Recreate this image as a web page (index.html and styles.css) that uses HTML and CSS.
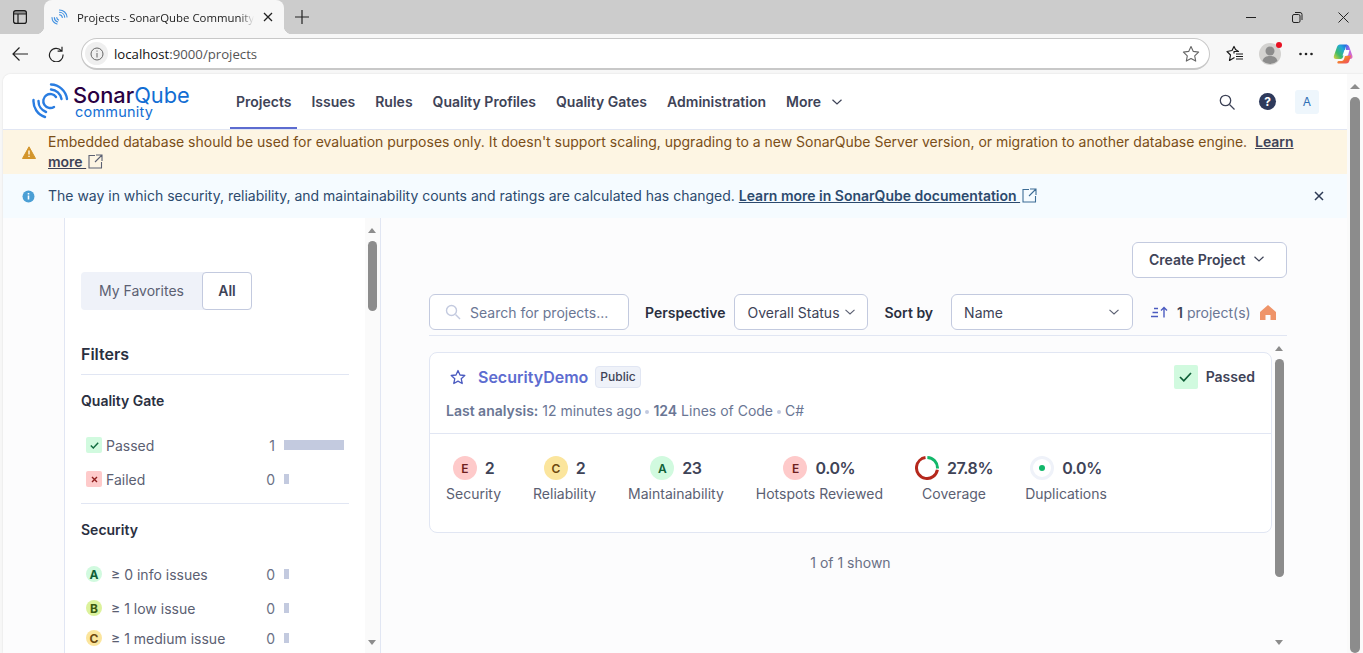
FILE: index.html
```html
<!DOCTYPE html>
<html lang="en">
<head>
<meta charset="utf-8">
<title>Projects - SonarQube Community</title>
<link rel="stylesheet" href="styles.css">
</head>
<body>
<div class="tabstrip">
  <svg class="tabs-btn" width="14" height="14" viewBox="0 0 14 14"><rect x=".6" y=".6" width="12.800" height="12.800" rx="2.200" fill="none" stroke="#1a1a1a" stroke-width="1.200"/><path d="M1 4h12M5 4v9.500" stroke="#1a1a1a" stroke-width="1.200" fill="none"/><rect x="1" y="1" width="12" height="3" fill="#1a1a1a" opacity=".35"/></svg>
  <div class="tab">
    <svg width="17" height="17" viewBox="0 0 17 17" fill="none" stroke="#3f8fe0" stroke-width="1.100" stroke-linecap="round"><path d="M1 8.500a7 7 0 0 0 5 6.500M3.300 8.600a5 5 0 0 0 3.400 4.300M5.800 8.600a3 3 0 0 0 1.700 2.300M8.500 1a7.500 7.500 0 0 1 7.500 7M8.500 3.300a5.300 5.300 0 0 1 5.200 5M8.500 5.700a3 3 0 0 1 2.800 2.800"/></svg>
    <span class="tab-title">Projects - SonarQube Community</span>
    <svg width="10" height="10" viewBox="0 0 10 10"><path d="M1 1l8 8M9 1l-8 8" stroke="#222" stroke-width="1.300"/></svg>
  </div>
  <svg class="newtab" width="14" height="14" viewBox="0 0 14 14"><path d="M7 0v14M0 7h14" stroke="#222" stroke-width="1.200"/></svg>
  <div class="winbtns">
    <svg width="11" height="11" viewBox="0 0 11 11"><path d="M0 5.500h10" stroke="#222" stroke-width="1"/></svg>
    <svg width="11" height="11" viewBox="0 0 11 11" fill="none" stroke="#222"><rect x=".5" y="2.500" width="7.500" height="8" rx="1.500"/><path d="M3 .5h5a2 2 0 0 1 2 2V8"/></svg>
    <svg width="11" height="11" viewBox="0 0 11 11"><path d="M.5.500l10 10M10.500 .5l-10 10" stroke="#222" stroke-width="1"/></svg>
  </div>
</div>
<div class="toolbar">
  <svg width="16" height="14" viewBox="0 0 16 14" fill="none" stroke="#222" stroke-width="1.200"><path d="M16 7H1M7.500.5L1 7l6.500 6.500"/></svg>
  <svg class="reload" width="16" height="16" viewBox="0 0 16 16" fill="none" stroke="#222" stroke-width="1.200"><path d="M13.500 4.800A6.800 6.800 0 1 0 15 8.500M14 .8v4.400H9.600"/></svg>
  <div class="omnibox">
    <span class="site-info"><svg width="14" height="14" viewBox="0 0 14 14" fill="none" stroke="#666"><circle cx="7" cy="7" r="6"/><path d="M7 6v4.500M7 3.500v1.200"/></svg></span>
    <span class="url">localhost<span class="url-dim">:9000/projects</span></span>
    <svg class="omni-star" width="18" height="18" viewBox="0 0 18 18" fill="none" stroke="#666" stroke-width="1.100" stroke-linejoin="round"><path d="M9 1.500l2.300 4.900 5.300.7-3.900 3.700 1 5.300L9 13.500l-4.700 2.600 1-5.300-3.900-3.700 5.300-.7z"/></svg>
  </div>
  <svg class="fav" width="18" height="18" viewBox="0 0 18 18" fill="none" stroke="#1a1a1a" stroke-width="1.200" stroke-linejoin="round"><path d="M8 8.500V6.500H12.500L9.500 4.500 8 1.500 6 5.500 1 6.500l3.500 3.500L3.500 15.500l5-3"/><path d="M10 9h7M10 11.500h7M10 14h7"/></svg>
  <div class="avatar">
    <svg width="22" height="22" viewBox="0 0 22 22"><circle cx="11" cy="11" r="11" fill="#d3d2d0"/><circle cx="11" cy="8" r="4.500" fill="#8c8c8c"/><path d="M3.500 18c1-3.800 4-5 7.500-5s6.500 1.200 7.500 5a11 11 0 0 1-15 0z" fill="#8c8c8c"/></svg>
    <span class="avatar-dot"></span>
  </div>
  <svg class="dots" width="14" height="4" viewBox="0 0 14 4" fill="#222"><circle cx="1.500" cy="2" r="1.300"/><circle cx="7" cy="2" r="1.300"/><circle cx="12.500" cy="2" r="1.300"/></svg>
  <svg class="copilot" width="22" height="22" viewBox="0 0 22 22"><defs><linearGradient id="cg1" x1="0" y1="1" x2="1" y2="0"><stop offset="0" stop-color="#e8d23a"/><stop offset=".35" stop-color="#3dbb6a"/><stop offset=".7" stop-color="#22a8d8"/><stop offset="1" stop-color="#1f5fe0"/></linearGradient><linearGradient id="cg2" x1="0" y1="0" x2="1" y2="1"><stop offset="0" stop-color="#3f6fe8"/><stop offset=".5" stop-color="#b566e8"/><stop offset="1" stop-color="#ee6bb0"/></linearGradient><linearGradient id="cg3" x1="0" y1="0" x2="1" y2="1"><stop offset="0" stop-color="#f7c02b"/><stop offset=".6" stop-color="#f26a3a"/><stop offset="1" stop-color="#ee4d7c"/></linearGradient></defs><path d="M7 1.500h6.500L10 14c-.5 1.500-1.500 2-3 2H3C1 16 .3 14.500 1 12.500l3-8.500C4.500 2.500 5.500 1.500 7 1.500z" fill="url(#cg1)"/><path d="M13 1.500c1.800 0 2.800 1 3.300 2.500l3 8.500c.7 2-.2 3.500-2.200 3.500h-3L13 6z" fill="url(#cg2)"/><path d="M5 20.500h8c1.800 0 2.800-.8 3.300-2.500L18 12.500l-6 .5-1 3c-.5 1.500-1.500 2-3 2H5.500c-1.500 0-1.500 2.500-.5 2.500z" fill="url(#cg3)"/><path d="M11.500 7h5l-1.500 5.500h-5.500z" fill="#fff"/></svg>
</div>

<div class="page">
  <header class="nav">
    <div class="logo">
      <svg width="38" height="37" viewBox="0 0 38 37" fill="none" stroke="#2a7de1" stroke-width="2.400" stroke-linecap="round"><path d="M19 1.500A16.500 16.500 0 0 1 35 16M19 6.500A11.500 11.500 0 0 1 29.500 16M1.500 17A16.500 16.500 0 0 0 13 34M6.500 18A11.500 11.500 0 0 0 14 29"/><path d="M24 14A7 7 0 1 0 22 24"/></svg>
      <div class="logo-text">
        <div class="logo-name">Sonar<span class="logo-blue">Qube</span></div>
        <div class="logo-sub">community</div>
      </div>
    </div>
    <nav class="nav-links">
      <a class="nav-link active">Projects</a>
      <a class="nav-link">Issues</a>
      <a class="nav-link">Rules</a>
      <a class="nav-link">Quality Profiles</a>
      <a class="nav-link">Quality Gates</a>
      <a class="nav-link">Administration</a>
      <a class="nav-link">More <svg class="more-chev" width="10" height="6" viewBox="0 0 10 6" fill="none" stroke="#3e4357" stroke-width="1.200"><path d="M.5.800L5 5 9.500.800"/></svg></a>
    </nav>
    <div class="nav-right">
      <svg width="16" height="16" viewBox="0 0 16 16" fill="none" stroke="#3e4357" stroke-width="1.300"><circle cx="6.500" cy="6.500" r="5.200"/><path d="M10.500 10.500l5 5"/></svg>
      <span class="help">?</span>
      <span class="user-chip">A</span>
    </div>
  </header>
  <div class="banner warn">
    <svg class="banner-icon" width="14" height="13" viewBox="0 0 14 13"><path d="M7 .8L13.500 12.500H.5z" fill="#d3952b" stroke="#d3952b" stroke-linejoin="round"/><path d="M7 4.500v4M7 9.800v1.200" stroke="#fdf5e3" stroke-width="1.500"/></svg>
    <p class="banner-text">Embedded database should be used for evaluation purposes only. It doesn't support scaling, upgrading to a new SonarQube Server version, or migration to another database engine.&nbsp; <a class="banner-link">Learn more <svg class="ext" width="15" height="15" viewBox="0 0 15 15" fill="none" stroke="#5b6072" stroke-width="1.100"><path d="M7 1.500H1v12.500h12.500V8M8 1h6v6M14 1L7 8"/></svg></a></p>
  </div>
  <div class="banner info">
    <svg class="banner-icon icon-info" width="13" height="13" viewBox="0 0 13 13"><circle cx="6.500" cy="6.500" r="6" fill="#4b9fd5"/><path d="M6.500 5.500v4M6.500 3v1.500" stroke="#fff" stroke-width="1.600"/></svg>
    <p class="banner-text grow">The way in which security, reliability, and maintainability counts and ratings are calculated has changed. <a class="banner-link">Learn more in SonarQube documentation <svg class="ext" width="15" height="15" viewBox="0 0 15 15" fill="none" stroke="#3d6d96" stroke-width="1.100"><path d="M7 1.500H1v12.500h12.500V8M8 1h6v6M14 1L7 8"/></svg></a></p>
    <svg class="banner-close" width="10" height="10" viewBox="0 0 10 10"><path d="M1 1l8 8M9 1l-8 8" stroke="#2d3a55" stroke-width="1.500"/></svg>
  </div>
  <div class="workspace">
    <aside class="sidebar">
      <div class="segment">
        <span class="seg-off">My Favorites</span>
        <span class="seg-on">All</span>
      </div>
      <h2 class="filters-title">Filters</h2>
      <section class="facet facet-first">
        <h3 class="facet-title">Quality Gate</h3>
        <div class="facet-row">
          <span class="qg-chip ok"><svg width="9" height="7" viewBox="0 0 9 7" fill="none" stroke="#0f6b3f" stroke-width="1.400"><path d="M.8 3.500L3.300 6 8.200.8"/></svg></span>
          <span class="facet-label tight">Passed</span><span class="facet-count">1</span><span class="bar full"></span>
        </div>
        <div class="facet-row">
          <span class="qg-chip bad"><svg width="7" height="7" viewBox="0 0 7 7" fill="none" stroke="#8f1d1d" stroke-width="1.400"><path d="M1 1l5 5M6 1L1 6"/></svg></span>
          <span class="facet-label tight">Failed</span><span class="facet-count">0</span><span class="bar"></span>
        </div>
      </section>
      <section class="facet">
        <h3 class="facet-title">Security</h3>
        <div class="facet-row">
          <span class="rate small r-a">A</span>
          <span class="facet-label">≥ 0 info issues</span><span class="facet-count">0</span><span class="bar"></span>
        </div>
        <div class="facet-row">
          <span class="rate small r-b">B</span>
          <span class="facet-label">≥ 1 low issue</span><span class="facet-count">0</span><span class="bar"></span>
        </div>
        <div class="facet-row row-tight">
          <span class="rate small r-c">C</span>
          <span class="facet-label">≥ 1 medium issue</span><span class="facet-count">0</span><span class="bar"></span>
        </div>
      </section>
      <div class="sb sb-side"><i class="sb-up"></i><b class="sb-thumb"></b><i class="sb-down"></i></div>
    </aside>
    <main class="main">
      <div class="create-row">
        <button class="create-btn">Create Project <svg width="10" height="6" viewBox="0 0 10 6" fill="none" stroke="#3e4357" stroke-width="1.200"><path d="M.5.800L5 5 9.500.800"/></svg></button>
      </div>
      <div class="controls">
        <div class="search"><svg width="16" height="16" viewBox="0 0 16 16" fill="none" stroke="#c3cadf" stroke-width="1.400"><circle cx="6.500" cy="6.500" r="5"/><path d="M10.500 10.500l4.500 4.500"/></svg><span class="sel-text">Search for projects...</span></div>
        <span class="ctl-label">Perspective</span>
        <div class="select sel-persp"><span class="sel-text">Overall Status</span><svg width="10" height="6" viewBox="0 0 10 6" fill="none" stroke="#5b6072" stroke-width="1.100"><path d="M.5.800L5 5 9.500.800"/></svg></div>
        <span class="ctl-label sort-label">Sort by</span>
        <div class="select sel-sort"><span class="sel-text">Name</span><svg width="10" height="6" viewBox="0 0 10 6" fill="none" stroke="#5b6072" stroke-width="1.100"><path d="M.5.800L5 5 9.500.800"/></svg></div>
        <svg class="sort-icon" width="17" height="12" viewBox="0 0 17 12" fill="none" stroke="#4b5bc0" stroke-width="1.400"><path d="M3 2.500h4M1.500 6.500h5.500M0 10.500h7M13 11.500V1.500M10 4.500l3-3 3 3"/></svg>
        <span class="pcount"><b>1</b> project(s)</span>
        <svg class="home" width="16" height="15" viewBox="0 0 16 15"><path d="M8 0L16 7v8h-5.500v-5h-5v5H0V7z" fill="#ef9469"/></svg>
      </div>
      <article class="card">
        <div class="card-top">
          <div class="card-title-row">
            <svg class="star" width="16" height="16" viewBox="0 0 16 16" fill="none" stroke="#4b5bc0" stroke-width="1.300" stroke-linejoin="round"><path d="M8 1.500l2 4.500 4.800.5-3.600 3.200 1 4.800L8 12.100l-4.200 2.400 1-4.800L1.200 6.500 6 6z"/></svg>
            <a class="project-name">SecurityDemo</a>
            <span class="badge">Public</span>
            <span class="gate"><span class="gate-chip"><svg width="13" height="10" viewBox="0 0 13 10" fill="none" stroke="#0f5f38" stroke-width="1.700"><path d="M1 5l3.800 3.800L12 1"/></svg></span><span class="gate-text">Passed</span></span>
          </div>
          <div class="meta"><b>Last analysis:</b> 12 minutes ago<i class="dot"></i><b>124</b> Lines of Code<i class="dot"></i>C#</div>
        </div>
        <div class="measures">
          <div class="measure m-sec"><div class="m-val"><span class="rate r-e">E</span>2</div><div class="m-label">Security</div></div>
          <div class="measure m-rel"><div class="m-val"><span class="rate r-c">C</span>2</div><div class="m-label">Reliability</div></div>
          <div class="measure m-main"><div class="m-val"><span class="rate r-a">A</span>23</div><div class="m-label">Maintainability</div></div>
          <div class="measure m-hot"><div class="m-val"><span class="rate r-e">E</span>0.0%</div><div class="m-label">Hotspots Reviewed</div></div>
          <div class="measure m-cov"><div class="m-val"><svg class="ring" width="24" height="24" viewBox="0 0 24 24" fill="none" stroke-width="3"><circle cx="12" cy="12" r="10.500" stroke="#b5281c" stroke-dasharray="46 20" transform="rotate(9 12 12)"/><circle cx="12" cy="12" r="10.500" stroke="#12b76a" stroke-dasharray="16.500 50" transform="rotate(-88 12 12)"/></svg>27.8%</div><div class="m-label">Coverage</div></div>
          <div class="measure m-dup"><div class="m-val"><svg class="ring" width="24" height="24" viewBox="0 0 24 24" fill="none"><circle cx="12" cy="12" r="10.500" stroke="#eff2f9" stroke-width="3"/><circle cx="12" cy="12" r="3" fill="#12b76a"/></svg>0.0%</div><div class="m-label">Duplications</div></div>
        </div>
      </article>
      <div class="shown">1 of 1 shown</div>
      <div class="sb sb-list"><i class="sb-up"></i><b class="sb-thumb"></b><i class="sb-down"></i></div>
    </main>
  </div>
  <div class="sb sb-page"><i class="sb-up"></i><b class="sb-thumb"></b></div>
</div>
</body>
</html>
```
FILE: styles.css
```css
* { box-sizing: border-box; }
html, body { margin: 0; height: 653px; overflow: hidden; }
body { background: #f7f7f7; font-family: Inter, "Liberation Sans", sans-serif; font-size: 14px; color: #3e4357; }
p, h2, h3 { margin: 0; }

.tabstrip { height: 34px; background: #cccccc; display: flex; align-items: center; position: relative; }
.tabs-btn { margin-left: 13px; flex: none; }
.tab { position: relative; width: 240px; height: 34px; margin-left: 17px; background: #f7f7f7; border-radius: 8px 8px 0 0; display: flex; align-items: center; padding: 0 11px 0 7px; gap: 9px; }
.tab::before, .tab::after { content: ""; position: absolute; bottom: 0; width: 8px; height: 8px; }
.tab::before { left: -8px; background: radial-gradient(circle at 0 0, transparent 8px, #f7f7f7 8.500px); }
.tab::after { right: -8px; background: radial-gradient(circle at 100% 0, transparent 8px, #f7f7f7 8.500px); }
.tab-title { font: 11.400px "Open Sans", sans-serif; color: #222; flex: 1; white-space: nowrap; overflow: hidden; width: 176px; -webkit-mask-image: linear-gradient(90deg, #000 92%, transparent); mask-image: linear-gradient(90deg, #000 92%, transparent); }
.newtab { margin-left: 11px; }
.winbtns { margin-left: auto; display: flex; gap: 35px; padding-right: 14px; align-items: center; }

.toolbar { height: 40px; display: flex; align-items: center; padding-left: 12px; background: #f7f7f7; }
.reload { margin-left: 20px; }
.omnibox { width: 1129px; height: 32px; margin-left: 17px; border: 1px solid #c8c8c8; border-bottom-width: 2px; border-radius: 16px; background: #fff; display: flex; align-items: center; padding-left: 3px; }
.site-info { width: 23px; height: 23px; border-radius: 50%; background: #efefef; display: flex; align-items: center; justify-content: center; }
.url { margin-left: 6px; font: 13.200px "Open Sans", sans-serif; color: #111; flex: 1; }
.url-dim { color: #555; }
.omni-star { margin-right: 9px; }
.fav { margin-left: 16px; }
.avatar { position: relative; margin-left: 15px; width: 22px; height: 22px; }
.avatar svg { display: block; }
.avatar-dot { position: absolute; right: -1px; top: -1px; width: 6px; height: 6px; border-radius: 50%; background: #e81123; }
.dots { margin-left: 18px; }
.copilot { margin-left: 20px; }

.page { position: relative; height: 579px; margin-left: 3px; background: #fafafa; border-radius: 8px 0 0 0; display: flex; flex-direction: column; overflow: hidden; padding-right: 16px; box-shadow: 0 0 2px rgba(0,0,0,.12); }

.nav { height: 56px; flex: none; display: flex; align-items: center; padding-left: 29px; border-bottom: 1px solid #e1e6f3; background: #fff; }
.logo { display: flex; align-items: center; gap: 3px; width: 198px; flex: none; }
.logo-text { line-height: 1; }
.logo-name { font: 500 21.800px/20px Inter, sans-serif; color: #290042; }
.logo-blue { color: #126ed3; font-weight: 400; }
.logo-sub { font: 400 14.500px/14px Inter, sans-serif; color: #126ed3; letter-spacing: .2px; margin: 0 0 0 2px; }
.nav-links { display: flex; gap: 20px; height: 55px; align-items: center; margin-left: 6px; }
.nav-link { font-weight: 600; font-size: 14px; color: #3e4357; position: relative; white-space: nowrap; height: 55px; line-height: 55px; display: block; }
.nav-link.active::after { content: ""; position: absolute; left: -6px; right: -6px; bottom: 0; height: 2px; background: #5d6cd0; }
.more-chev { margin-left: 7px; vertical-align: 2px; }
.nav-right { margin-left: auto; display: flex; align-items: center; padding-right: 28px; }
.help { width: 17px; height: 17px; margin-left: 24px; border-radius: 50%; background: #2e3a5c; color: #fff; font-weight: 700; font-size: 12px; line-height: 17px; text-align: center; }
.user-chip { width: 24px; height: 24px; margin-left: 19px; border-radius: 3px; background: #eef6fc; color: #2f6fb5; font-size: 12px; line-height: 24px; text-align: center; }

.banner { flex: none; display: flex; align-items: center; padding-left: 19px; padding-right: 23px; font-size: 14px; line-height: 20px; height: 44px; }
.banner-icon { flex: none; margin-right: 12px; }
.banner-text { letter-spacing: -.006px; }
.icon-info { margin-right: 13px; }
.warn { background: #fdf5e3; color: #7a4e17; }
.info { background: #f5fbff; color: #2c4a6e; }
.banner-link { font-weight: 600; text-decoration: underline; color: #3e4357; }
.info .banner-link { color: #2c4a6e; }
.ext { vertical-align: -2px; margin-left: 2px; }
.warn .banner-text { width: 1260px; }
.grow { flex: 1; }

.workspace { flex: 1; min-height: 0; display: flex; background: #fcfcfd; position: relative; }
.sidebar { position: relative; flex: none; width: 317px; margin-left: 61px; background: #fff; border-left: 1px solid #e1e6f3; border-right: 1px solid #e1e6f3; padding: 54px 31px 0 16px; overflow: hidden; }
.segment { display: flex; width: 171px; height: 38px; background: #eff2f9; border-radius: 4px; }
.seg-off { width: 121px; line-height: 38px; text-align: center; color: #5b6072; }
.seg-on { width: 50px; line-height: 36px; text-align: center; font-weight: 600; background: #fff; border: 1px solid #c3cadf; border-radius: 4px; }
.filters-title { font-size: 16px; font-weight: 600; line-height: 24px; color: #2a2f40; margin-top: 32px; padding-bottom: 8px; border-bottom: 1px solid #e1e6f3; }
.facet { padding-top: 16px; }
.facet-first { padding-bottom: 7px; border-bottom: 1px solid #e1e6f3; }
.facet-title { font-size: 14px; font-weight: 600; line-height: 20px; color: #2a2f40; margin-bottom: 17px; }
.facet-row { height: 34px; display: flex; align-items: center; padding-left: 5px; color: #5b6072; }
.row-tight { height: 26px; }
.facet-label { margin-left: 9px; flex: 1; }
.facet-label.tight { margin-left: 4px; }
.facet-count { margin-right: 9px; color: #6a7085; }
.bar { width: 5px; height: 10px; background: #c3cadf; margin-right: 60px; }
.bar.full { width: 60px; margin-right: 5px; }
.qg-chip { width: 16px; height: 16px; border-radius: 2px; display: flex; align-items: center; justify-content: center; }
.ok { background: #d1fadf; }
.bad { background: #fecaca; }

.rate { width: 24px; height: 24px; border-radius: 50%; display: inline-flex; align-items: center; justify-content: center; font-weight: 600; font-size: 12px; flex: none; }
.rate.small { width: 16px; height: 16px; font-size: 12px; font-weight: 700; }
.r-a { background: #d1fadf; color: #0f5f38; }
.r-b { background: #dcf29c; color: #3a5a12; }
.r-c { background: #fbe59d; color: #6e4a10; }
.r-e { background: #fecaca; color: #6e1f1f; }

.main { flex: 1; position: relative; padding: 0 0 0 48px; min-width: 0; }
.create-row { display: flex; justify-content: flex-end; padding-top: 24px; width: 858px; }
.create-btn { width: 155px; height: 36px; padding: 0 0 2px 16px; background: #fff; border: 1px solid #c3cadf; border-radius: 6px; font: 600 14px Inter, sans-serif; color: #3e4357; display: flex; align-items: center; gap: 9px; }
.controls { display: flex; align-items: center; width: 858px; height: 42px; margin-top: 16px; padding-bottom: 5px; border-bottom: 1px solid #e1e6f3; }
.search { width: 200px; height: 36px; background: #fff; border: 1px solid #c3cadf; border-radius: 6px; display: flex; align-items: center; gap: 9px; padding-left: 15px; color: #6a7694; }
.sel-text { padding-top: 1px; }
.ctl-label { font-weight: 600; color: #2a2f40; margin-left: 16px; }
.select { height: 36px; background: #fff; border: 1px solid #c3cadf; border-radius: 6px; display: flex; align-items: center; justify-content: space-between; color: #3e4357; }
.sel-persp { width: 134px; margin-left: 9px; padding: 0 12px; }
.sel-sort { width: 182px; margin-left: 18px; padding: 0 13px 0 12px; }
.sort-icon { margin-left: 18px; }
.pcount { margin-left: 9px; color: #6a7694; }
.pcount b { font-weight: 600; color: #3e4357; }
.home { margin-left: 9px; }

.card { width: 843px; height: 181px; margin-top: 16px; background: #fff; border: 1px solid #e1e6f3; border-radius: 8px; }
.card-top { height: 81px; border-bottom: 1px solid #e1e6f3; padding: 12px 16px 0; }
.card-title-row { display: flex; align-items: center; height: 24px; }
.star { margin-left: 4px; }
.project-name { font-size: 16px; font-weight: 600; color: #5d6cd0; margin-left: 12px; }
.badge { margin-left: 7px; height: 22px; padding: 0 4px; line-height: 20px; font-size: 12px; font-weight: 500; background: #eff2f9; border: 1px solid #e1e6f3; border-radius: 4px; color: #3e4357; }
.gate { margin-left: auto; display: flex; align-items: center; font-weight: 600; color: #3e4357; gap: 8px; }
.gate-text { margin-top: -2px; }
.gate-chip { width: 24px; height: 24px; border-radius: 2px; background: #d1fadf; display: flex; align-items: center; justify-content: center; }
.meta { margin-top: 12px; line-height: 20px; color: #6a7694; }
.meta b { font-weight: 600; }
.dot { display: inline-block; width: 4px; height: 4px; border-radius: 50%; background: #c3cadf; margin: 0 4px; vertical-align: 2px; }

.measures { display: flex; align-items: flex-start; padding-top: 22px; position: relative; }
.measure { display: flex; flex-direction: column; align-items: center; flex: none; }
.m-val { display: flex; align-items: center; gap: 8px; height: 24px; font-size: 16px; font-weight: 600; color: #3e4357; letter-spacing: -.4px; }
.m-label { margin-top: 4px; line-height: 20px; color: #5b6072; }
.ring { flex: none; }
.m-sec { margin-left: 16px; }
.m-rel, .m-main, .m-hot, .m-cov, .m-dup { margin-left: 32px; }

.shown { width: 843px; text-align: center; margin-top: 20px; line-height: 20px; color: #6a7085; }

.sb { position: absolute; top: 0; bottom: 0; width: 9px; }
.sb-thumb { position: absolute; left: 0; width: 9px; border-radius: 5px; background: #8c8c8c; }
.sb-up, .sb-down { position: absolute; left: 0; width: 0; height: 0; border-left: 4.500px solid transparent; border-right: 4.500px solid transparent; }
.sb-up { border-bottom: 5px solid #8c8c8c; }
.sb-down { border-top: 5px solid #8c8c8c; }
.sb-side { left: 303px; }
.sb-side::before { content: ""; position: absolute; top: 0; bottom: 0; left: -3px; width: 15px; background: #fafafa; }
.sb-side .sb-up { top: 10px; }
.sb-side .sb-thumb { top: 23px; height: 70px; }
.sb-side .sb-down { top: 422px; }
.sb-list { left: 894px; }
.sb-list .sb-up { top: 128px; }
.sb-list .sb-thumb { top: 141px; height: 218px; }
.sb-list .sb-down { top: 422px; }
.sb-page { right: 3px; top: 0; width: 10px; }
.sb-page .sb-up { top: 10px; border-left-width: 5px; border-right-width: 5px; }
.sb-page .sb-thumb { top: 23px; width: 10px; bottom: 0; }
```
